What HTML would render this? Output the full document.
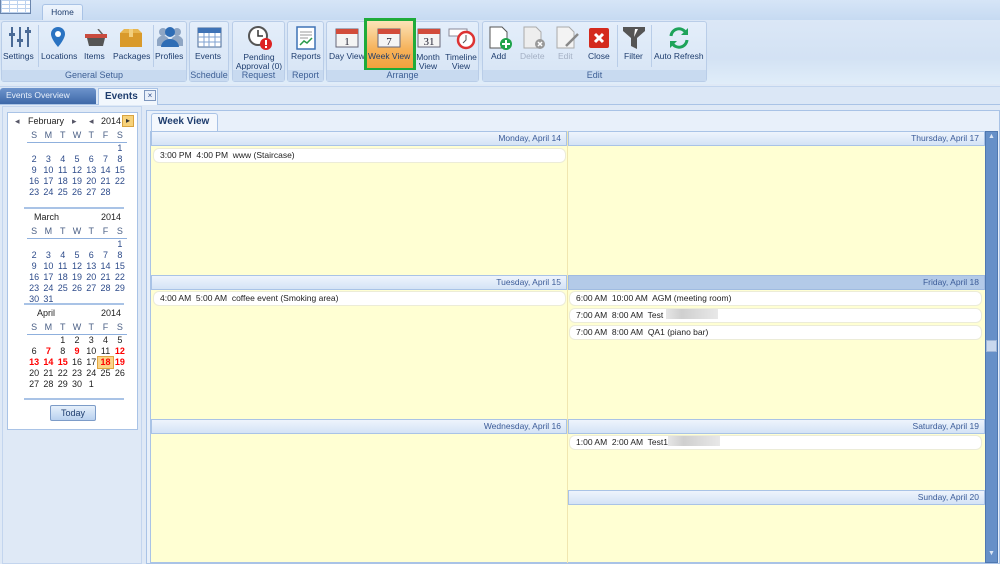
<!DOCTYPE html>
<html><head><meta charset="utf-8"><style>
*{box-sizing:border-box;margin:0;padding:0}
body{width:1000px;height:564px;overflow:hidden;position:relative;background:#dfe9f6;font-family:"Liberation Sans",Arial,sans-serif;font-size:9px;color:#1e3d6e}
.a{position:absolute}
.grp{position:absolute;top:21px;height:61px;background:linear-gradient(#e4eefa,#d6e4f5);border:1px solid #b9cde8;border-radius:3px}
.gl{position:absolute;left:0;right:0;bottom:0;height:11px;background:#c8daf0;text-align:center;font-size:9px;color:#3d5f95;line-height:11px;z-index:5}
.btn{position:absolute;top:30px;text-align:center;font-size:8.5px;color:#1e3d6e;line-height:9px;white-space:nowrap}
.ic{position:absolute;top:4px}
.sep{position:absolute;top:3px;width:1px;height:42px;background:#b9cde8}
.hdr{position:absolute;height:15px;background:linear-gradient(#eef4fc,#d4e3f6);border:1px solid #a9c3e6;text-align:right;padding-right:5px;font-size:8.5px;line-height:13px;color:#3b5b98}
.ev{position:absolute;height:15px;background:#fff;border:1px solid #ececd8;border-radius:6px;font-size:8.5px;line-height:13px;padding-left:6px;color:#222;white-space:pre}
.blur{display:inline-block;width:52px;height:10px;vertical-align:-1px;background:linear-gradient(90deg,#e6e6e6,#cfcfcf 30%,#dadada 60%,#e8e8e8)}
table{border-collapse:collapse;position:absolute;left:27px;width:100px;font-size:9px}
td{width:14.3px;height:11px;text-align:center;color:#2d4b8a;padding:0;line-height:11px}
.dw td{color:#4a5f85;height:13px;border-bottom:1px solid #8fb0dd}
.red{color:#f00!important;font-weight:bold}
.bk{color:#222!important}
.mh{position:absolute;font-size:9px;color:#222}
.hl{position:absolute;left:24px;width:100px;height:2px;background:#a9c3e6}
</style></head><body>
<div class="a" style="left:0;top:0;width:1000px;height:20px;background:linear-gradient(#d6e5f7,#c6daf2)"></div>
<div class="a" style="left:0;top:0;width:31px;height:14px;background:#fff;border:1px solid #6b86ad;border-top:none;background-image:linear-gradient(#bcd2ee 1px,transparent 1px),linear-gradient(90deg,#bcd2ee 1px,transparent 1px);background-size:8px 4px"></div>
<div class="a" style="left:42px;top:4px;width:41px;height:17px;background:linear-gradient(#eef5fd,#dfeaf8);border:1px solid #a9c3e6;border-bottom:none;border-radius:3px 3px 0 0;text-align:center;font-size:8.5px;line-height:15px;color:#1e3d6e">Home</div>
<div class="a" style="left:0;top:20px;width:1000px;height:64px;background:linear-gradient(#dbe7f6,#d3e2f4 60%,#e0edf9)"></div>

<div class="grp" style="left:1px;width:186px">
 <div class="ic" style="left:6px"><svg width="24" height="22"><g stroke="#4a6a96" stroke-width="2"><line x1="4" y1="1" x2="4" y2="21"/><line x1="12" y1="1" x2="12" y2="21"/><line x1="20" y1="1" x2="20" y2="21"/></g><g fill="#4a6a96"><rect x="1" y="7" width="6" height="3"/><rect x="9" y="13" width="6" height="3"/><rect x="17" y="4" width="6" height="3"/></g></svg></div>
 <div class="btn" style="left:1px">Settings</div>
 <div class="sep" style="left:36px"></div>
 <div class="ic" style="left:48px"><svg width="16" height="22"><path d="M8 1a7 7 0 0 1 7 7c0 5-7 13-7 13S1 13 1 8a7 7 0 0 1 7-7z" fill="#2a73c2"/><circle cx="8" cy="8" r="3" fill="#fff"/></svg></div>
 <div class="btn" style="left:39px">Locations</div>
 <div class="ic" style="left:82px;top:7px"><svg width="24" height="18"><line x1="14" y1="0" x2="19" y2="6" stroke="#666" stroke-width="1.5"/><rect x="1" y="5" width="22" height="4" fill="#c94b3f"/><path d="M3 9h18l-2 8H5z" fill="#555"/></svg></div>
 <div class="btn" style="left:82px">Items</div>
 <div class="ic" style="left:117px;top:6px"><svg width="24" height="20"><rect x="1" y="5" width="22" height="14" fill="#d99a2b"/><path d="M1 5l4-4h14l4 4z" fill="#e8b650"/><rect x="10" y="1" width="4" height="8" fill="#f2cf7d"/></svg></div>
 <div class="btn" style="left:111px">Packages</div>
 <div class="sep" style="left:151px"></div>
 <div class="ic" style="left:155px"><svg width="26" height="22"><circle cx="6" cy="6" r="4" fill="#8fa6c4"/><circle cx="20" cy="6" r="4" fill="#8fa6c4"/><path d="M0 18a6 6 0 0 1 12-4v6H0zM14 14a6 6 0 0 1 12 4v2H14z" fill="#8fa6c4"/><circle cx="13" cy="6" r="5" fill="#2f6db5"/><path d="M4 21a9 8 0 0 1 18 0z" fill="#2f6db5"/></svg></div>
 <div class="btn" style="left:153px">Profiles</div>
 <div class="gl">General Setup</div>
</div>
<div class="grp" style="left:189px;width:40px">
 <div class="ic" style="left:7px"><svg width="25" height="22"><rect x="1" y="2" width="23" height="19" fill="#fff" stroke="#4a6a96"/><rect x="1" y="2" width="23" height="5" fill="#3f73b6"/><g stroke="#7fa2d0"><line x1="1" y1="11" x2="24" y2="11"/><line x1="1" y1="16" x2="24" y2="16"/><line x1="7" y1="7" x2="7" y2="21"/><line x1="12" y1="7" x2="12" y2="21"/><line x1="18" y1="7" x2="18" y2="21"/></g></svg></div>
 <div class="btn" style="left:5px">Events</div>
 <div class="gl">Schedule</div>
</div>
<div class="grp" style="left:232px;width:53px">
 <div class="ic" style="left:15px"><svg width="24" height="24"><circle cx="10" cy="10" r="9" fill="#fff" stroke="#555" stroke-width="2"/><path d="M10 4v6h5" stroke="#333" stroke-width="1.5" fill="none"/><circle cx="18" cy="18" r="6" fill="#d22"/><rect x="17" y="14" width="2" height="5" fill="#fff"/><rect x="17" y="20" width="2" height="2" fill="#fff"/></svg></div>
 <div class="btn" style="left:2px;width:48px;top:31px">Pending<br>Approval (0)</div>
 <div class="gl">Request</div>
</div>
<div class="grp" style="left:287px;width:37px">
 <div class="ic" style="left:8px"><svg width="20" height="24"><rect x="1" y="1" width="18" height="22" fill="#fff" stroke="#3f73b6" stroke-width="1.5"/><g stroke="#999"><line x1="4" y1="6" x2="16" y2="6"/><line x1="4" y1="9" x2="16" y2="9"/><line x1="4" y1="12" x2="12" y2="12"/></g><path d="M4 19l4-4 3 2 5-5" stroke="#2a9a4a" stroke-width="1.5" fill="none"/></svg></div>
 <div class="btn" style="left:3px">Reports</div>
 <div class="gl">Report</div>
</div>
<div class="grp" style="left:326px;width:153px">
 <div class="ic" style="left:8px;top:5px"><svg width="24" height="21"><rect x="1" y="2" width="22" height="18" fill="#f4f4f4" stroke="#667"/><rect x="1" y="2" width="22" height="5" fill="#d24b3a"/><text x="12" y="18" font-size="11" text-anchor="middle" font-family="Liberation Serif" fill="#223">1</text></svg></div>
 <div class="btn" style="left:2px">Day View</div>
 <div class="a" style="left:37px;top:-4px;width:52px;height:53px;border:3px solid #1fab3a;background:linear-gradient(#fbe3b8,#f6b25a 60%,#f3a23d);z-index:3"></div>
 <div class="ic" style="left:50px;top:5px;z-index:4"><svg width="24" height="21"><rect x="1" y="2" width="22" height="18" fill="#f4f4f4" stroke="#667"/><rect x="1" y="2" width="22" height="5" fill="#d24b3a"/><text x="12" y="18" font-size="11" text-anchor="middle" font-family="Liberation Serif" fill="#223">7</text></svg></div>
 <div class="btn" style="left:41px;z-index:4">Week View</div>
 <div class="ic" style="left:90px;top:5px"><svg width="24" height="21"><rect x="1" y="2" width="22" height="18" fill="#f4f4f4" stroke="#667"/><rect x="1" y="2" width="22" height="5" fill="#d24b3a"/><text x="12" y="18" font-size="11" text-anchor="middle" font-family="Liberation Serif" fill="#223">31</text></svg></div>
 <div class="btn" style="left:88px;width:26px;top:31px">Month<br>View</div>
 <div class="ic" style="left:121px;top:4px"><svg width="28" height="24"><rect x="1" y="3" width="18" height="7" fill="#fff" stroke="#889"/><circle cx="18" cy="14" r="8" fill="#fff" stroke="#d33" stroke-width="2.5"/><path d="M18 9v5l-3 3" stroke="#555" fill="none"/></svg></div>
 <div class="btn" style="left:118px;width:32px;top:31px">Timeline<br>View</div>
 <div class="gl">Arrange</div>
</div>
<div class="grp" style="left:482px;width:225px">
 <div class="ic" style="left:6px"><svg width="24" height="24"><path d="M1 1h12l5 5v16H1z" fill="#fff" stroke="#555"/><circle cx="17" cy="18" r="6" fill="#1ea34a"/><path d="M17 14v8M13 18h8" stroke="#fff" stroke-width="2"/></svg></div>
 <div class="btn" style="left:8px">Add</div>
 <div class="ic" style="left:40px"><svg width="24" height="24"><path d="M1 1h12l5 5v16H1z" fill="#eee" stroke="#aaa"/><circle cx="17" cy="18" r="5" fill="#999"/><path d="M15 16l4 4M19 16l-4 4" stroke="#fff" stroke-width="1.5"/></svg></div>
 <div class="btn" style="left:37px;color:#a4b0c4">Delete</div>
 <div class="ic" style="left:73px"><svg width="24" height="24"><path d="M1 1h12l5 5v16H1z" fill="#f3f3f3" stroke="#aaa"/><path d="M10 20l12-12" stroke="#888" stroke-width="2.5"/></svg></div>
 <div class="btn" style="left:75px;color:#a4b0c4">Edit</div>
 <div class="ic" style="left:106px;top:6px"><svg width="20" height="20"><rect width="20" height="20" rx="2" fill="#d42a1d"/><path d="M6 6l8 8M14 6l-8 8" stroke="#fff" stroke-width="3"/></svg></div>
 <div class="btn" style="left:105px">Close</div>
 <div class="sep" style="left:134px"></div>
 <div class="ic" style="left:140px;top:5px"><svg width="22" height="22"><path d="M0 0h22v4l-8 7v11l-6-3V11L0 4z" fill="#555"/><path d="M12 2l3 0-4 8" fill="#fff"/></svg></div>
 <div class="btn" style="left:141px">Filter</div>
 <div class="sep" style="left:168px"></div>
 <div class="ic" style="left:184px;top:4px"><svg width="24" height="24"><path d="M4 10a8 8 0 0 1 15-3M20 14a8 8 0 0 1-15 3" stroke="#1ea35a" stroke-width="3" fill="none"/><path d="M21 2v7h-7zM3 22v-7h7z" fill="#1ea35a"/></svg></div>
 <div class="btn" style="left:171px">Auto Refresh</div>
 <div class="gl">Edit</div>
</div>

<div class="a" style="left:0;top:86px;width:1000px;height:19px;background:#dbe7f6;border-top:1px solid #c2d5ee;border-bottom:1px solid #a9c3e6"></div>
<div class="a" style="left:0;top:88px;width:96px;height:16px;background:linear-gradient(#6e94cc,#3d68a8);border-radius:3px 3px 0 0;color:#e8f0fb;font-size:8.5px;line-height:15px;padding-left:6px">Events Overview</div>
<div class="a" style="left:98px;top:88px;width:60px;height:17px;background:#f2f7fd;border:1px solid #a9c3e6;border-bottom:none;font-size:10px;font-weight:bold;line-height:15px;padding-left:6px;color:#1e3d6e">Events</div>
<div class="a" style="left:144px;top:90px;width:12px;height:11px;border:1px solid #7d96bd;background:#e9f0fa;font-size:8px;line-height:9px;text-align:center;color:#2d4b8a">×</div>

<div class="a" style="left:2px;top:106px;width:140px;height:458px;border:1px solid #c3d5ee;background:#dfe9f6"></div>
<div class="a" style="left:7px;top:112px;width:131px;height:318px;background:#fff;border:1px solid #a9c3e6"></div>
<div class="mh" style="left:15px;top:116px;color:#556">◂</div>
<div class="mh" style="left:28px;top:116px">February</div>
<div class="mh" style="left:72px;top:116px;color:#556">▸</div>
<div class="mh" style="left:89px;top:116px;color:#556">◂</div>
<div class="mh" style="left:101px;top:116px">2014</div>
<div class="a" style="left:122px;top:115px;width:12px;height:12px;background:#f7d27a;border:1px solid #d9a441;font-size:8px;text-align:center;line-height:10px;color:#333">▸</div>
<table style="top:129px">
<tr class="dw"><td>S</td><td>M</td><td>T</td><td>W</td><td>T</td><td>F</td><td>S</td></tr>
<tr><td></td><td></td><td></td><td></td><td></td><td></td><td>1</td></tr>
<tr><td>2</td><td>3</td><td>4</td><td>5</td><td>6</td><td>7</td><td>8</td></tr>
<tr><td>9</td><td>10</td><td>11</td><td>12</td><td>13</td><td>14</td><td>15</td></tr>
<tr><td>16</td><td>17</td><td>18</td><td>19</td><td>20</td><td>21</td><td>22</td></tr>
<tr><td>23</td><td>24</td><td>25</td><td>26</td><td>27</td><td>28</td><td></td></tr>
</table>
<div class="hl" style="top:207px"></div>
<div class="mh" style="left:34px;top:212px">March</div>
<div class="mh" style="left:101px;top:212px">2014</div>
<table style="top:225px">
<tr class="dw"><td>S</td><td>M</td><td>T</td><td>W</td><td>T</td><td>F</td><td>S</td></tr>
<tr><td></td><td></td><td></td><td></td><td></td><td></td><td>1</td></tr>
<tr><td>2</td><td>3</td><td>4</td><td>5</td><td>6</td><td>7</td><td>8</td></tr>
<tr><td>9</td><td>10</td><td>11</td><td>12</td><td>13</td><td>14</td><td>15</td></tr>
<tr><td>16</td><td>17</td><td>18</td><td>19</td><td>20</td><td>21</td><td>22</td></tr>
<tr><td>23</td><td>24</td><td>25</td><td>26</td><td>27</td><td>28</td><td>29</td></tr>
<tr><td>30</td><td>31</td><td></td><td></td><td></td><td></td><td></td></tr>
</table>
<div class="hl" style="top:303px"></div>
<div class="mh" style="left:37px;top:308px">April</div>
<div class="mh" style="left:101px;top:308px">2014</div>
<table style="top:321px">
<tr class="dw"><td>S</td><td>M</td><td>T</td><td>W</td><td>T</td><td>F</td><td>S</td></tr>
<tr><td></td><td></td><td class="bk">1</td><td class="bk">2</td><td class="bk">3</td><td class="bk">4</td><td class="bk">5</td></tr>
<tr><td class="bk">6</td><td class="red">7</td><td class="bk">8</td><td class="red">9</td><td class="bk">10</td><td class="bk">11</td><td class="red">12</td></tr>
<tr><td class="red">13</td><td class="red">14</td><td class="red">15</td><td class="bk">16</td><td class="bk">17</td><td class="red" style="background:#fbd488;outline:1px solid #e0a640">18</td><td class="red">19</td></tr>
<tr><td class="bk">20</td><td class="bk">21</td><td class="bk">22</td><td class="bk">23</td><td class="bk">24</td><td class="bk">25</td><td class="bk">26</td></tr>
<tr><td class="bk">27</td><td class="bk">28</td><td class="bk">29</td><td class="bk">30</td><td class="bk">1</td><td></td><td></td></tr>
</table>
<div class="hl" style="top:398px"></div>
<div class="a" style="left:50px;top:405px;width:46px;height:16px;background:linear-gradient(#e6f0fb,#b9d1ef);border:1px solid #7d9cc8;border-radius:2px;text-align:center;font-size:9px;line-height:14px;color:#1e3d6e">Today</div>

<div class="a" style="left:146px;top:110px;width:854px;height:454px;border:1px solid #a9c3e6;background:#e8f0fa"></div>
<div class="a" style="left:151px;top:113px;width:67px;height:18px;background:#f4f8fd;border:1px solid #a9c3e6;border-bottom:none;border-radius:3px 3px 0 0;font-size:10px;font-weight:bold;line-height:16px;padding-left:6px;color:#1e3d6e">Week View</div>
<div class="a" style="left:150px;top:131px;width:836px;height:432px;background:#ffffd3;border:1px solid #a9c3e6"></div>
<div class="a" style="left:567px;top:131px;width:1px;height:432px;background:#f0e6b0"></div>

<div class="hdr" style="left:151px;top:131px;width:416px">Monday, April 14</div>
<div class="hdr" style="left:151px;top:275px;width:416px">Tuesday, April 15</div>
<div class="hdr" style="left:151px;top:419px;width:416px">Wednesday, April 16</div>
<div class="hdr" style="left:568px;top:131px;width:417px">Thursday, April 17</div>
<div class="hdr" style="left:568px;top:275px;width:417px;background:#b3cae8;border-color:#a0bbe0">Friday, April 18</div>
<div class="hdr" style="left:568px;top:419px;width:417px">Saturday, April 19</div>
<div class="hdr" style="left:568px;top:490px;width:417px">Sunday, April 20</div>

<div class="ev" style="left:153px;top:148px;width:413px">3:00 PM  4:00 PM  www (Staircase)</div>
<div class="ev" style="left:153px;top:291px;width:413px">4:00 AM  5:00 AM  coffee event (Smoking area)</div>
<div class="ev" style="left:569px;top:291px;width:413px">6:00 AM  10:00 AM  AGM (meeting room)</div>
<div class="ev" style="left:569px;top:308px;width:413px">7:00 AM  8:00 AM  Test <span class="blur"></span></div>
<div class="ev" style="left:569px;top:325px;width:413px">7:00 AM  8:00 AM  QA1 (piano bar)</div>
<div class="ev" style="left:569px;top:435px;width:413px">1:00 AM  2:00 AM  Test1<span class="blur"></span></div>

<div class="a" style="left:985px;top:131px;width:13px;height:432px;background:#6690c8;border:1px solid #4f78b0"></div>
<div class="a" style="left:986px;top:133px;width:11px;height:10px;color:#dbe6f5;font-size:7px;text-align:center">▲</div>
<div class="a" style="left:986px;top:340px;width:11px;height:12px;background:#c9d8ee;border:1px solid #9fb6d8"></div>
<div class="a" style="left:986px;top:550px;width:11px;height:10px;color:#dbe6f5;font-size:7px;text-align:center">▼</div>
</body></html>
